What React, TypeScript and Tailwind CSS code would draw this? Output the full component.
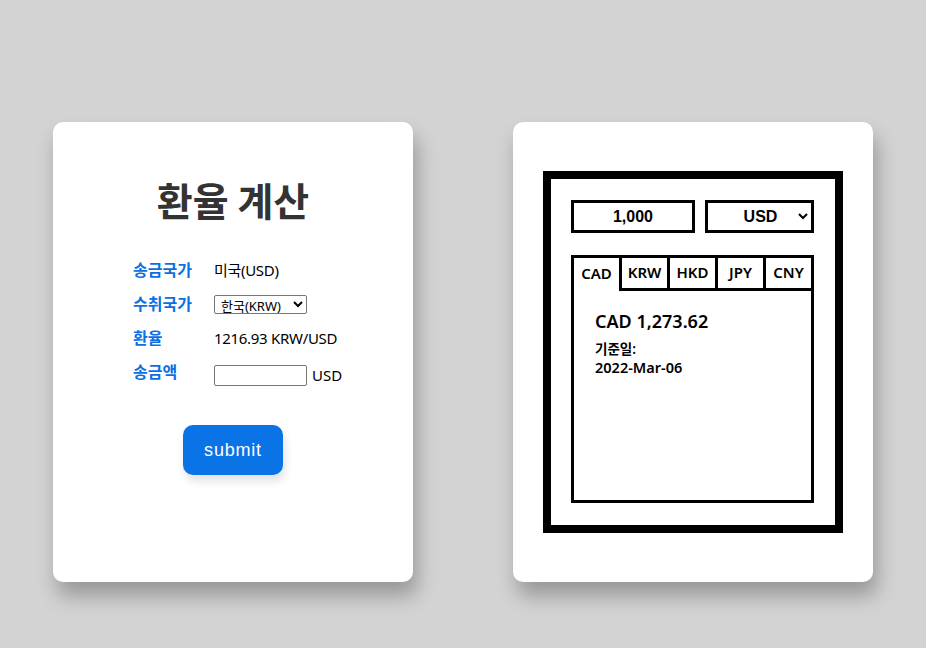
import { useState } from "react";

const rows = [
  { label: "송금국가", kind: "text", value: "미국(USD)" },
  { label: "수취국가", kind: "select" },
  { label: "환율", kind: "text", value: "1216.93 KRW/USD" },
  { label: "송금액", kind: "input" },
];

const tabs = ["CAD", "KRW", "HKD", "JPY", "CNY"];

export default function App() {
  const [active, setActive] = useState("CAD");
  const [amount, setAmount] = useState("1,000");

  return (
    <div className="min-h-[648px] bg-[#d3d3d3] flex justify-center items-start gap-[100px] pt-[122px] font-['Noto_Sans','Noto_Sans_CJK_KR',sans-serif]">
      {/* calculator card */}
      <div className="w-[360px] h-[460px] bg-white rounded-[10px] shadow-[4px_14px_20px_rgba(0,0,0,0.28)] flex flex-col items-center pt-[52px]">
        <h1 className="text-[39px] leading-[50px] font-bold text-[#333] font-['Noto_Sans_CJK_KR',sans-serif]">
          환율 계산
        </h1>

        <div className="self-start ml-[80px] mt-[29px] flex flex-col text-[15px] text-black">
          {rows.map((row) => (
            <div key={row.label} className="flex items-center h-[34px]">
              <span className="w-[81px] font-bold text-[#0b70e3] text-[16px]">{row.label}</span>
              {row.kind === "text" && <span className="tracking-[-0.3px]">{row.value}</span>}
              {row.kind === "select" && (
                <select className="w-[93px] h-[19px] border border-[#767676] rounded-[2px] text-[13px] leading-none px-[2px] bg-white">
                  <option>한국(KRW)</option>
                  <option>일본(JPY)</option>
                  <option>필리핀(PHP)</option>
                </select>
              )}
              {row.kind === "input" && (
                <span className="flex items-center gap-[5px] mt-[6px]">
                  <input className="w-[93px] h-[21px] border border-[#767676] rounded-[2px] bg-white" />
                  <span>USD</span>
                </span>
              )}
            </div>
          ))}
        </div>

        <button className="mt-[36px] w-[100px] h-[50px] rounded-[10px] bg-[#0a74e6] text-white text-[18px] tracking-[0.8px] font-['Liberation_Sans',sans-serif] shadow-[2px_6px_10px_rgba(0,0,0,0.12)]">
          submit
        </button>
      </div>

      {/* result card */}
      <div className="w-[360px] h-[460px] bg-white rounded-[10px] shadow-[4px_14px_20px_rgba(0,0,0,0.28)] pt-[49px] pl-[30px]">
        <div className="w-[300px] h-[362px] border-[8px] border-black px-[20px] pt-[21px] flex flex-col">
          <div className="flex gap-[10px] h-[33px]">
            <input
              value={amount}
              onChange={(e) => setAmount(e.target.value)}
              className="w-[124px] h-[33px] border-[3px] border-black text-center font-bold text-[16px] font-['Liberation_Sans',sans-serif] outline-none"
            />
            <select className="w-[109px] h-[33px] border-[3px] border-black text-center font-bold text-[16px] font-['Liberation_Sans',sans-serif] bg-white pl-[14px]">
              <option>USD</option>
              <option>CAD</option>
              <option>KRW</option>
            </select>
          </div>

          <div className="mt-[22px] w-[243px] h-[248px] border-[3px] border-black flex flex-col">
            <div className="flex h-[33px]">
              {tabs.map((t, i) => (
                <button
                  key={t}
                  onClick={() => setActive(t)}
                  className={
                    (active === t ? "" : "border-b-[3px] ") +
                    (i < tabs.length - 1 ? "border-r-[3px] " : "") +
                    "flex-1 border-black text-[15px] font-semibold leading-none pb-[2px]"
                  }
                >
                  {t}
                </button>
              ))}
            </div>
            <div className="px-[21px] pt-[18px]">
              <div className="text-[18px] font-semibold leading-[24px]">CAD 1,273.62</div>
              <div className="mt-[7px] font-semibold">
                <div className="text-[13.5px] leading-[18px]">기준일:</div>
                <div className="text-[14.5px] leading-[18px]">2022-Mar-06</div>
              </div>
            </div>
          </div>
        </div>
      </div>
    </div>
  );
}
